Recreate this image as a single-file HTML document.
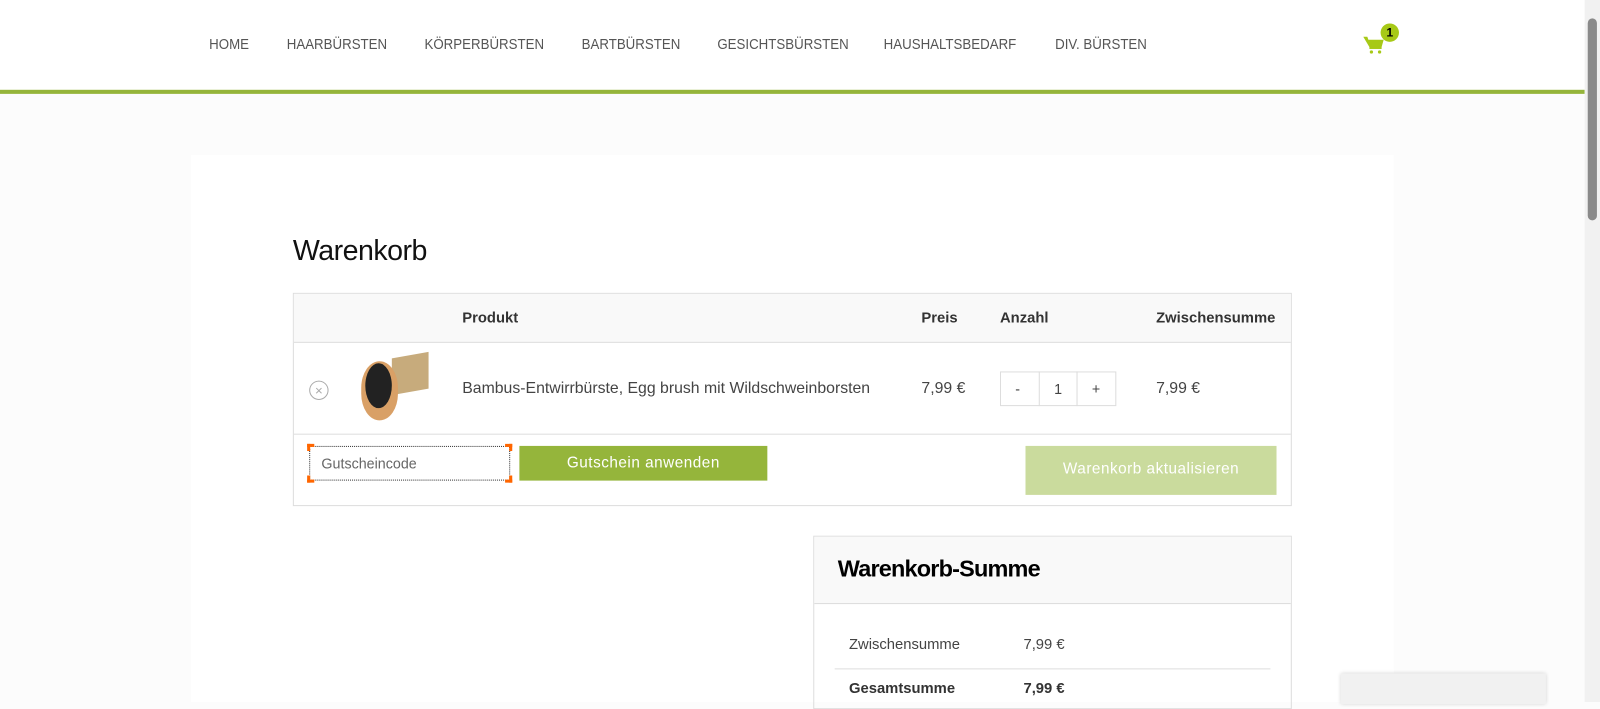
<!DOCTYPE html>
<html><head><meta charset="utf-8"><style>
*{box-sizing:border-box;margin:0;padding:0}
body{width:1600px;height:688px;overflow:hidden;background:#fcfcfc;font-family:"Liberation Sans",sans-serif;color:#444;position:relative}
#w{position:absolute;left:0;top:0;width:1568px;height:674px;transform:scale(1.0204);transform-origin:0 0}
.hdr{position:absolute;left:0;top:0;width:1553px;height:92px;background:#fff;border-bottom:4px solid #95b53b}
.nav{position:absolute;top:35px;font-size:14px;color:#555;transform:scaleX(0.93);transform-origin:0 0}
.main{position:absolute;left:187px;top:152px;width:1179px;height:536px;background:#fff}
h1{position:absolute;left:287px;top:230px;font-size:28px;font-weight:normal;color:#111;letter-spacing:-0.5px}
.tbl{position:absolute;left:287px;top:287px;width:979px;height:209px;border:1px solid #ddd}
.th{position:absolute;top:0;left:0;right:0;height:48px;background:#f9f9f9;border-bottom:1px solid #ddd}
.t{position:absolute;font-size:14.5px}
.b{font-weight:bold;color:#333}
.sb{position:absolute;left:1553px;top:0;width:15px;height:688px;background:#f1f1f1}
.c{position:absolute;width:7px;height:7px;border-color:#f60;border-style:solid;border-width:0}
</style></head><body><div id="w">
<div class="hdr">
<span class="nav" style="left:205px">HOME</span>
<span class="nav" style="left:281px">HAARBÜRSTEN</span>
<span class="nav" style="left:416px">KÖRPERBÜRSTEN</span>
<span class="nav" style="left:570px">BARTBÜRSTEN</span>
<span class="nav" style="left:703px">GESICHTSBÜRSTEN</span>
<span class="nav" style="left:866px">HAUSHALTSBEDARF</span>
<span class="nav" style="left:1034px">DIV. BÜRSTEN</span>
<svg style="position:absolute;left:1336px;top:34px" width="22" height="20" viewBox="0 0 22 20"><path d="M0 2h4l1 3h15l-2 7H6z" fill="#a7c917"/><rect x="6" y="12" width="12" height="2" fill="#a7c917"/><circle cx="8" cy="17" r="1.6" fill="#a7c917"/><circle cx="16" cy="17" r="1.6" fill="#a7c917"/></svg>
<div style="position:absolute;left:1353px;top:23px;width:18px;height:18px;border-radius:50%;background:#a7c917;font-size:12px;font-weight:bold;color:#000;text-align:center;line-height:18px">1</div>
</div>
<div class="main"></div>
<h1>Warenkorb</h1>
<div class="tbl">
<div class="th"></div>
<span class="t b" style="left:165px;top:16px">Produkt</span>
<span class="t b" style="left:615px;top:16px">Preis</span>
<span class="t b" style="left:692px;top:16px">Anzahl</span>
<span class="t b" style="left:845px;top:16px">Zwischensumme</span>
<div style="position:absolute;left:15px;top:85px;width:19px;height:19px;border:1px solid #aaa;border-radius:50%;color:#aaa;font-size:13px;text-align:center;line-height:17px">×</div>
<div style="position:absolute;left:96px;top:60px;width:36px;height:36px;background:#c7ab7c;transform:skewY(-10deg)"></div>
<div style="position:absolute;left:66px;top:66px;width:36px;height:58px;border-radius:50%/45%;background:#d9a066"></div>
<div style="position:absolute;left:70px;top:68px;width:26px;height:44px;border-radius:50%;background:#222"></div>
<span class="t" style="left:165px;top:84px;font-size:15.5px">Bambus-Entwirrbürste, Egg brush mit Wildschweinborsten</span>
<span class="t" style="left:615px;top:84px;font-size:15.5px">7,99 €</span>
<div style="position:absolute;left:692px;top:76px;width:114px;height:34px;border:1px solid #ddd;font-size:14px">
<span style="position:absolute;left:14px;top:8px">-</span>
<span style="position:absolute;left:37px;top:-1px;width:38px;height:34px;border-left:1px solid #ddd;border-right:1px solid #ddd;text-align:center;line-height:34px">1</span>
<span style="position:absolute;left:89px;top:8px">+</span></div>
<span class="t" style="left:845px;top:84px;font-size:15.5px">7,99 €</span>
<div style="position:absolute;left:0;right:0;top:137px;border-top:1px solid #ddd"></div>
<div style="position:absolute;left:15px;top:149px;width:197px;height:34px;border:1px dotted #333;font-size:14px;color:#666;padding:8px 11px">Gutscheincode</div>
<div class="c" style="left:13px;top:147px;border-width:3px 0 0 3px"></div>
<div class="c" style="left:207px;top:147px;border-width:3px 3px 0 0"></div>
<div class="c" style="left:13px;top:178px;border-width:0 0 3px 3px"></div>
<div class="c" style="left:207px;top:178px;border-width:0 3px 3px 0"></div>
<div style="position:absolute;left:221px;top:149px;width:243px;height:34px;background:#95b53b;color:#fff;font-size:15px;text-align:center;line-height:33px;letter-spacing:0.5px">Gutschein anwenden</div>
<div style="position:absolute;left:717px;top:149px;width:246px;height:48px;background:#cadb9d;color:#fff;font-size:15px;text-align:center;line-height:46px;letter-spacing:0.5px">Warenkorb aktualisieren</div>
</div>
<div style="position:absolute;left:797px;top:525px;width:469px;height:170px;border:1px solid #ddd">
<div style="height:66px;background:#f9f9f9;border-bottom:1px solid #ddd;font-size:23px;font-weight:bold;color:#000;padding:18px 23px;letter-spacing:-0.8px">Warenkorb-Summe</div>
<span class="t" style="left:34px;top:98px">Zwischensumme</span>
<span class="t" style="left:205px;top:98px">7,99 €</span>
<div style="position:absolute;left:20px;right:20px;top:129px;border-top:1px solid #ddd"></div>
<span class="t b" style="left:34px;top:141px">Gesamtsumme</span>
<span class="t b" style="left:205px;top:141px">7,99 €</span>
</div>
<div style="position:absolute;left:1314px;top:660px;width:201px;height:30px;background:#f1f1f1;box-shadow:0 0 4px rgba(0,0,0,.2)"></div>
<div class="sb"><div style="position:absolute;left:3px;top:18px;width:9px;height:198px;border-radius:5px;background:#8a8a8a"></div></div>
</div></body></html>
